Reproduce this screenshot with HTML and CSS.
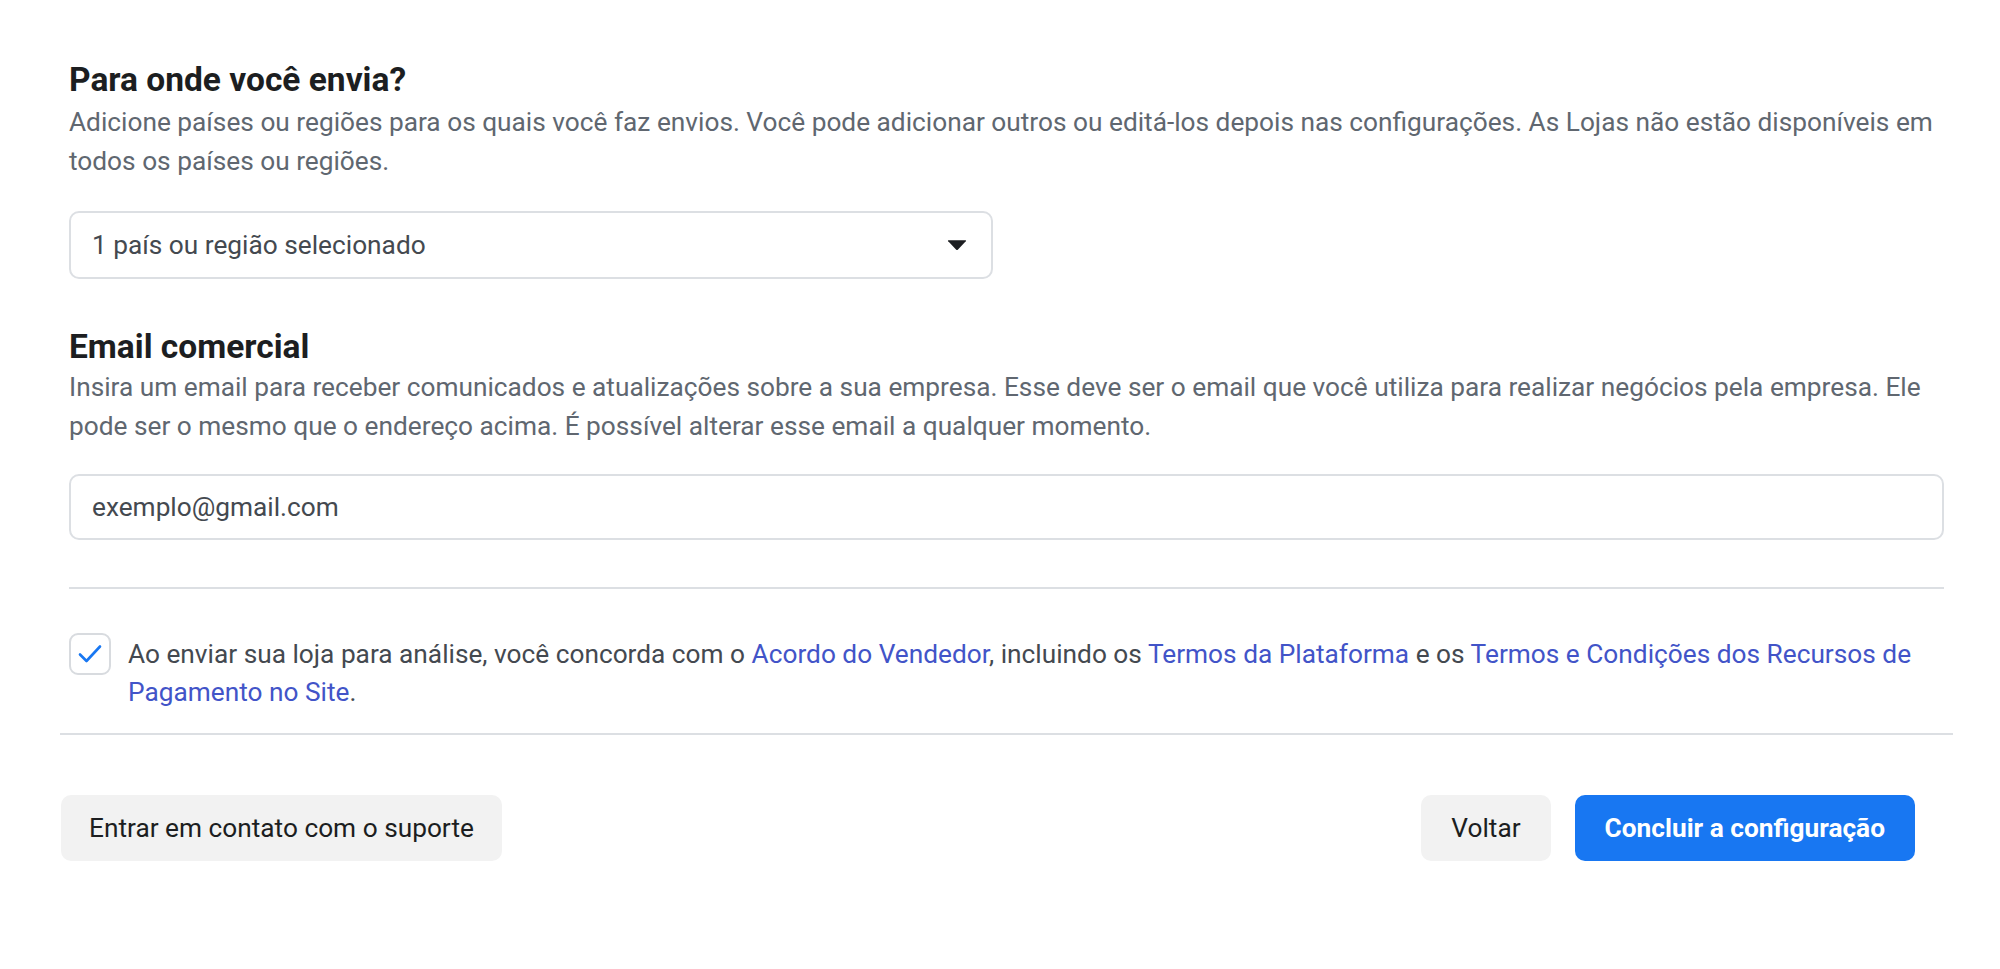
FILE: index.html
```html
<!DOCTYPE html>
<html lang="pt-BR">
<head>
<meta charset="utf-8">
<title>Configuração da loja</title>
<link rel="stylesheet" href="styles.css">
</head>
<body>
<div class="page">
  <div class="form">
    <section class="field">
      <h2 class="field-title">Para onde você envia?</h2>
      <p class="field-desc">Adicione países ou regiões para os quais você faz envios. Você pode adicionar outros ou editá-los depois nas configurações. As Lojas não estão disponíveis em todos os países ou regiões.</p>
      <div class="select">
        <span class="select-value">1 país ou região selecionado</span>
        <svg class="caret" width="20" height="12" viewBox="0 0 20 12"><path d="M1.5 1.2 H18.5 Q19.6 1.2 18.8 2.2 L11 10.6 Q10 11.6 9 10.6 L1.2 2.2 Q0.4 1.2 1.5 1.2 Z" fill="#1c1e21"/></svg>
      </div>
    </section>
    <section class="field field-email">
      <h2 class="field-title">Email comercial</h2>
      <p class="field-desc">Insira um email para receber comunicados e atualizações sobre a sua empresa. Esse deve ser o email que você utiliza para realizar negócios pela empresa. Ele pode ser o mesmo que o endereço acima. É possível alterar esse email a qualquer momento.</p>
      <div class="input"><span class="input-value">exemplo@gmail.com</span></div>
    </section>
  </div>
  <div class="divider divider-inner"></div>
  <div class="agree">
    <span class="checkbox">
      <svg width="26" height="22" viewBox="0 0 26 22"><path d="M3 11.5 L9.5 18 L23 3.5" fill="none" stroke="#1877f2" stroke-width="2.6" stroke-linecap="round" stroke-linejoin="round"/></svg>
    </span>
    <p class="agree-text">Ao enviar sua loja para análise, você concorda com o <a href="#">Acordo do Vendedor</a>, incluindo os <a href="#">Termos da Plataforma</a> e os <a href="#">Termos e Condições dos Recursos de Pagamento no Site</a>.</p>
  </div>
  <div class="divider divider-outer"></div>
  <div class="footer">
    <button class="btn btn-secondary">Entrar em contato com o suporte</button>
    <div class="footer-right">
      <button class="btn btn-secondary btn-back">Voltar</button>
      <button class="btn btn-primary">Concluir a configuração</button>
    </div>
  </div>
</div>
</body>
</html>
```
FILE: styles.css
```css
* { box-sizing: border-box; }
html, body { margin: 0; padding: 0; background: #ffffff; }
body {
  font-family: Roboto, "Liberation Sans", Arial, sans-serif;
  font-size: 26.25px;
  color: #1c1e21;
}
.page {
  width: 1893px;
  margin-left: 60px;
  padding-top: 61px;
}
.form {
  padding: 0 9px;
}
.field-title {
  margin: 0;
  font-size: 33.5px;
  line-height: 38px;
  font-weight: 700;
  color: #1c1e21;
}
.field-desc {
  margin: 4px 0 0;
  font-size: 26.25px;
  line-height: 38.5px;
  color: #606770;
}
.select {
  margin-top: 31px;
  width: 924px;
  height: 68px;
  border: 2px solid #dcdfe3;
  border-radius: 10px;
  display: flex;
  align-items: center;
  justify-content: space-between;
  padding: 0 24px 0 21px;
}
.select-value, .input-value {
  color: #444950;
  font-size: 26.25px;
}
.caret { display: block; }
.field-email { margin-top: 49px; }
.field-email .field-desc { margin-top: 2px; }
.input {
  margin-top: 29px;
  height: 66px;
  border: 2px solid #dcdfe3;
  border-radius: 10px;
  display: flex;
  align-items: center;
  padding: 0 21px;
}
.divider {
  height: 2px;
  background: #dcdfe3;
}
.divider-inner {
  margin: 47px 9px 0;
}
.agree {
  display: flex;
  align-items: flex-start;
  gap: 17px;
  padding: 47px 9px 0;
}
.checkbox {
  flex: none;
  width: 42px;
  height: 42px;
  margin-top: -3px;
  border: 2px solid #d8dbdf;
  border-radius: 9px;
  display: flex;
  align-items: center;
  justify-content: center;
}
.agree-text {
  margin: 0;
  font-size: 26.25px;
  line-height: 37.5px;
  color: #444950;
}
.agree-text a {
  color: #4254c8;
  text-decoration: none;
}
.divider-outer {
  margin-top: 22px;
}
.footer {
  display: flex;
  justify-content: space-between;
  align-items: center;
  padding: 60px 38px 0 1px;
}
.footer-right {
  display: flex;
  gap: 24px;
}
.btn {
  font-family: Roboto, "Liberation Sans", Arial, sans-serif;
  font-size: 26.25px;
  height: 66px;
  border: none;
  border-radius: 10px;
  padding: 0 28px;
  cursor: pointer;
}
.btn-secondary {
  background: #f2f2f2;
  color: #1c1e21;
}
.btn-back { padding: 0 30px; }
.btn-primary {
  background: #1877f2;
  color: #ffffff;
  font-weight: 700;
  padding: 0 30px;
}
```
